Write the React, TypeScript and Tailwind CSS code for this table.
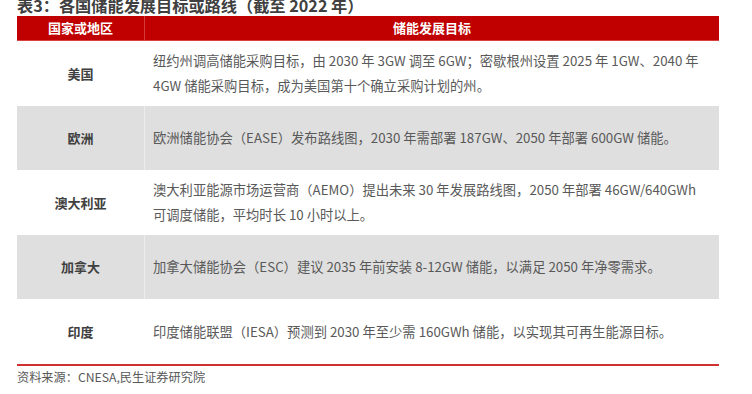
const rows = [
  {
    region: '美国',
    lines: [
      '纽约州调高储能采购目标，由 2030 年 3GW 调至 6GW；密歇根州设置 2025 年 1GW、2040 年',
      '4GW 储能采购目标，成为美国第十个确立采购计划的州。',
    ],
  },
  { region: '欧洲', lines: ['欧洲储能协会（EASE）发布路线图，2030 年需部署 187GW、2050 年部署 600GW 储能。'] },
  {
    region: '澳大利亚',
    lines: [
      '澳大利亚能源市场运营商（AEMO）提出未来 30 年发展路线图，2050 年部署 46GW/640GWh',
      '可调度储能，平均时长 10 小时以上。',
    ],
  },
  { region: '加拿大', lines: ['加拿大储能协会（ESC）建议 2035 年前安装 8-12GW 储能，以满足 2050 年净零需求。'] },
  { region: '印度', lines: ['印度储能联盟（IESA）预测到 2030 年至少需 160GWh 储能，以实现其可再生能源目标。'] },
];

export default function App() {
  return (
    <div className="h-[394px] w-[752px] overflow-hidden bg-white px-[17px] font-['Noto_Sans_CJK_SC','Noto_Sans',sans-serif]">
      <h1 className="-mt-[5px] h-[21px] whitespace-nowrap text-[16.2px] font-bold leading-[20px] text-[#404040]">
        表3：各国储能发展目标或路线（截至 2022 年）
      </h1>

      <div className="w-[702px]">
        <div className="flex h-[25px] border-b border-[#d94040] bg-[#c00000] text-[13px] font-bold text-white">
          <div className="flex w-[128px] items-center justify-center border-r border-[#d63a3a]">国家或地区</div>
          <div className="flex flex-1 items-center justify-center">储能发展目标</div>
        </div>

        {rows.map((row, i) => (
          <div
            key={row.region}
            className={`flex h-[64.5px] ${i % 2 === 1 ? 'bg-[#dfdfdf]' : 'bg-white'}`}
          >
            <div
              className={`flex w-[128px] items-center justify-center border-r text-[13px] font-bold text-[#404040] ${
                i % 2 === 1 ? 'border-[#ececec]' : 'border-white'
              }`}
            >
              {row.region}
            </div>
            <div className="flex flex-1 flex-col justify-center whitespace-nowrap pl-[8px] text-[13.3px] leading-[25px] text-[#595959]">
              {row.lines.map((line) => (
                <div key={line}>{line}</div>
              ))}
            </div>
          </div>
        ))}

        <div className="h-[2px] bg-[#d03030]" />
      </div>

      <p className="mt-[3px] text-[12.2px] leading-[16px] text-[#595959]">资料来源：CNESA,民生证券研究院</p>
    </div>
  );
}
